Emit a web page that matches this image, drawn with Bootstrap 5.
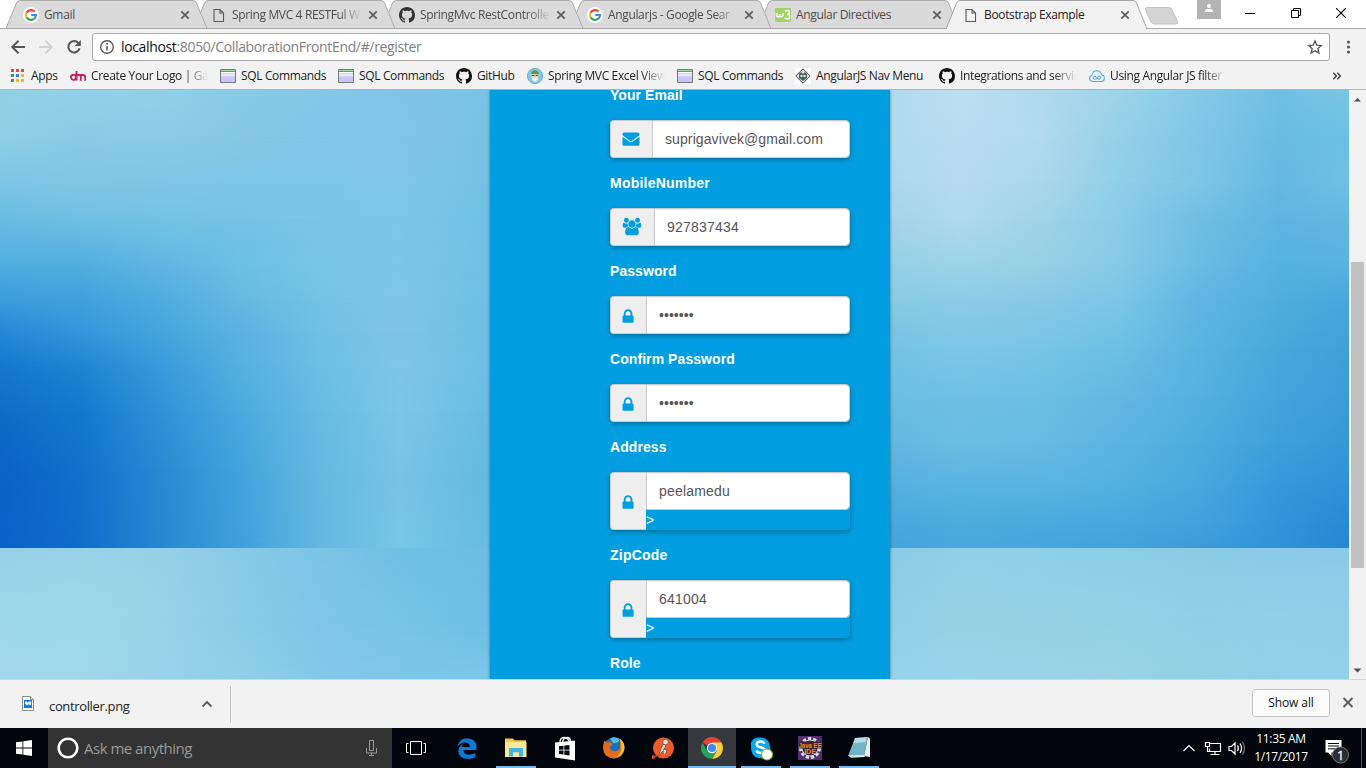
<!DOCTYPE html>
<html lang="en">
<head>
<meta charset="utf-8">
<meta name="viewport" content="width=device-width, initial-scale=1">
<title>Bootstrap Example</title>
<link href="https://cdn.jsdelivr.net/npm/bootstrap@5.3.0/dist/css/bootstrap.min.css" rel="stylesheet">
<style>
  body{width:1366px;height:768px;overflow:hidden;font:12px/16px "Open Sans","Noto Sans",sans-serif;color:#222;background:#fff}
  svg{display:block;flex:none}
  .ui{letter-spacing:-.35px;white-space:nowrap}
  .fade-end{-webkit-mask-image:linear-gradient(90deg,#000 calc(100% - 24px),transparent);mask-image:linear-gradient(90deg,#000 calc(100% - 24px),transparent)}
  /* tab strip */
  .tabstrip{height:29px;padding-left:6px;border-bottom:1px solid #a9a9a9}
  .tab{position:relative;width:201px;height:29px;margin-right:-13px;padding:1px 0 0 17px;gap:5px;color:#4c4c4c;flex:none}
  .tab > .shape{position:absolute;left:0;top:0;z-index:-1}
  .tab .ttl{width:131px}
  .tab.on{color:#222}
  .newtab{margin:7px 0 0 10px}
  .who{width:24px;height:19px;background:#b3b3b3}
  .winbtns{margin:0 2px 0 7px}
  .winbtn{width:45.5px;height:26px}
  /* toolbar */
  .tools{height:34px;background:#f2f2f2;padding:4px 0 2px}
  .omni{width:1238px;height:28px;border:1px solid #a9a9a9;border-radius:3px;background:#fff;font-size:14px}
  .omni .host{color:#111}
  .omni .rest{color:#808080}
  .marks{height:27px;background:#f2f2f2;border-bottom:1px solid #b5b3b4;padding:0 0 1px 10px;display:grid;grid-template-columns:60px 150px 118px 118px 71px 150px 118px 144px 150px 150px 1fr}
  .marks .ttl{width:117px}
  .marks > div{gap:5px;color:#1c1c1c}
  /* page */
  .page{height:589px;position:relative;overflow:hidden}
  .mesh{position:relative;overflow:hidden}
  .mesh > i{position:absolute;inset:0}
  .sheet{width:400px;background:#009ee0;box-shadow:0 0 3px rgba(0,0,0,.45);z-index:2;padding:0 40px 0 120px;font-family:"Liberation Sans",Arial,sans-serif;font-size:14px;line-height:20px;color:#fff}
  .sheet .fields{margin-top:-5px}
  .sheet label{display:block;margin-bottom:15px;font-weight:700;letter-spacing:.07px}
  .sheet .label-wide{letter-spacing:.22px}
  .field-row{margin-bottom:15px;box-shadow:0 2px 5px rgba(0,0,0,.3);border-radius:4px;display:flex}
  .sheet .input-group-text{background:#eee;border:1px solid #ccc;border-right:0;border-radius:4px 0 0 4px;padding:0 12px 0 11px;color:#009edf}
  .sheet .form-control{height:38px;border:1px solid #ccc;border-radius:0 4px 4px 0;padding:8px 12px;font-size:14px;line-height:20px;color:#555;box-shadow:inset 0 1px 1px rgba(0,0,0,.075);letter-spacing:.2px}
  .sheet .dots{letter-spacing:.05px}
  .sheet .mail{letter-spacing:.1px}
  .scroller{width:17px;background:#f1f1f1}
  .thumb{width:13px;height:306px;margin-top:156px;background:#c1c1c1}
  /* download shelf */
  .shelf{height:49px;background:#f2f2f2;border-top:1px solid #d6d4d4}
  .shelf .item{width:231px;height:37px;border-right:1px solid #c2c2c2;padding-left:21px;font-size:13px;color:#222}
  .shelf .item span{margin-left:14px}
  .showall{width:78px;height:28px;margin-bottom:2px;border:1px solid #c4c4c4;border-radius:3px;background:#fbfbfb;color:#111;letter-spacing:-.08px}
  /* taskbar */
  .taskbar{height:40px;background:#02050b;color:#fff}
  .ask{width:344px;background:#333;color:#9a9a9a;font-size:15px;letter-spacing:-.5px;padding:0 14px 0 8px}
  .app{position:relative;width:48px;height:40px;margin-right:1px;display:flex;align-items:center;justify-content:center}
  .app.view{margin-right:3px}
  .app.run::after{content:"";position:absolute;bottom:0;left:4px;right:4px;height:2px;background:#76b9ed}
  .app.cur{background:#35383d}
  .app.cur::after{left:0;right:0}
  .clock{width:64px;line-height:18px}
</style>
</head>
<body>
<svg width="0" height="0" class="position-absolute">
  <symbol id="gh" viewBox="0 0 16 16"><path fill="currentColor" d="M8 0C3.58 0 0 3.58 0 8c0 3.54 2.29 6.53 5.47 7.59.4.07.55-.17.55-.38 0-.19-.01-.82-.01-1.49-2.01.37-2.53-.49-2.69-.94-.09-.23-.48-.94-.82-1.13-.28-.15-.68-.52-.01-.53.63-.01 1.08.58 1.23.82.72 1.21 1.87.87 2.33.66.07-.52.28-.87.51-1.07-1.78-.2-3.64-.89-3.64-3.95 0-.87.31-1.59.82-2.15-.08-.2-.36-1.02.08-2.12 0 0 .67-.21 2.2.82.64-.18 1.32-.27 2-.27.68 0 1.36.09 2 .27 1.53-1.04 2.2-.82 2.2-.82.44 1.1.16 1.92.08 2.12.51.56.82 1.27.82 2.15 0 3.07-1.87 3.75-3.65 3.95.29.25.54.73.54 1.48 0 1.07-.01 1.93-.01 2.2 0 .21.15.46.55.38A8.012 8.012 0 0 0 16 8c0-4.42-3.58-8-8-8z"/></symbol>
  <symbol id="goog" viewBox="0 0 16 16"><circle cx="8" cy="8" r="8" fill="#fff"/><g fill="none" stroke-width="2.2"><path d="M11.600 4.600A5 5 0 0 0 3.600 5.700" stroke="#ea4335"/><path d="M3.600 5.600a5 5 0 0 0 0 4.800" stroke="#fbbc05"/><path d="M3.600 10.300a5 5 0 0 0 7.900 1.200" stroke="#34a853"/><path d="M11.400 11.600A5 5 0 0 0 13 8H8.200" stroke="#4285f4"/></g></symbol>
  <symbol id="doc" viewBox="0 0 16 16"><path d="M3 2.500h6l3.500 3.500v8.500H3zM9 2.500v3.500h3.500" fill="none" stroke="#5a5a5a" stroke-width="1.100"/></symbol>
  <symbol id="x" viewBox="0 0 10 10"><path d="M1.300 1.300l7.400 7.400M8.700 1.300L1.300 8.700" stroke="#5d5d5d" stroke-width="1.700"/></symbol>
  <symbol id="tabshape" viewBox="0 0 201 29"><path d="M0 28.500L10.500 3Q11.500 .5 14 .5H187Q189.500 .5 190.500 3L201 28.500z" fill="#dadada" stroke="#ababab"/></symbol>
  <symbol id="sql" viewBox="0 0 16 16"><path d="M.5 1.500h15v13H.5z" fill="#c6c6fb" stroke="#777"/><path d="M1 2h14v3H1z" fill="#fff"/><path d="M1 2.500h14v1.500H1z" fill="#3fb83f"/><path d="M1 5.500h14v3H1z" fill="#e6e6ff"/></symbol>
  <symbol id="lock" viewBox="0 0 12 16"><path fill="currentColor" transform="translate(-2.550 1.050) scale(.0096)" d="M640 768h512v-192q0-106-75-181t-181-75-181 75-75 181v192zm832 96v576q0 40-28 68t-68 28h-960q-40 0-68-28t-28-68v-576q0-40 28-68t68-28h32v-192q0-184 132-316t316-132 316 132 132 316v192h32q40 0 68 28t28 68z"/></symbol>
</svg>

<!-- tab strip -->
<div class="tabstrip d-flex align-items-start">
  <div class="tab ui d-flex align-items-center" style="z-index:6"><svg class="shape" width="201" height="29"><use href="#tabshape"/></svg><svg width="16" height="16"><use href="#goog"/></svg><span class="ttl">Gmail</span><svg width="10" height="10"><use href="#x"/></svg></div>
  <div class="tab ui d-flex align-items-center" style="z-index:5"><svg class="shape" width="201" height="29"><use href="#tabshape"/></svg><svg width="16" height="16"><use href="#doc"/></svg><span class="ttl fade-end">Spring MVC 4 RESTFul W</span><svg width="10" height="10"><use href="#x"/></svg></div>
  <div class="tab ui d-flex align-items-center" style="z-index:4"><svg class="shape" width="201" height="29"><use href="#tabshape"/></svg><svg width="16" height="16" color="#333"><use href="#gh"/></svg><span class="ttl fade-end">SpringMvc RestControlle</span><svg width="10" height="10"><use href="#x"/></svg></div>
  <div class="tab ui d-flex align-items-center" style="z-index:3"><svg class="shape" width="201" height="29"><use href="#tabshape"/></svg><svg width="16" height="16"><use href="#goog"/></svg><span class="ttl fade-end">Angularjs - Google Sear</span><svg width="10" height="10"><use href="#x"/></svg></div>
  <div class="tab ui d-flex align-items-center" style="z-index:2"><svg class="shape" width="201" height="29"><use href="#tabshape"/></svg><svg width="16" height="16"><rect y="1" width="16" height="14" rx="1" fill="#a1d266"/><path d="M1.500 6v2q0 1.800 1.500 1.800T4.600 8V7v1q0 1.800 1.600 1.800T8 8V6M10 4.300q1-.8 2.300-.8 2 0 2 1.900 0 1.800-2.300 1.800 2.700 0 2.700 2.300t-2.500 2.400q-1.500 0-2.400-.9" fill="none" stroke="#fff" stroke-width="1.500"/></svg><span class="ttl">Angular Directives</span><svg width="10" height="10"><use href="#x"/></svg></div>
  <div class="tab on ui d-flex align-items-center" style="z-index:7"><svg class="shape" width="201" height="29"><path d="M0 29L10.500 3Q11.500 .5 14 .5H187Q189.500 .5 190.500 3L201 29" fill="#f2f2f2" stroke="#a3a3a3"/></svg><svg width="16" height="16"><use href="#doc"/></svg><span class="ttl">Bootstrap Example</span><svg width="10" height="10"><use href="#x"/></svg></div>
  <svg class="newtab" width="36" height="18"><path d="M3 .5h22q2 0 3 2l5.500 12q.8 2.500-1.500 2.500H10q-2 0-3-2L1.500 3Q.8 .8 3 .5z" fill="#d4d4d4" stroke="#c2c2c2"/></svg>
  <div class="who ms-auto d-flex justify-content-center"><svg width="10" height="14"><circle cx="5" cy="6" r="2" fill="#fff"/><path d="M1 12V11q0-2 4-2t4 2v1z" fill="#fff"/></svg></div>
  <div class="winbtns d-flex">
    <div class="winbtn d-flex align-items-center justify-content-center"><svg width="10" height="10"><path d="M0 5.500h10" stroke="#000"/></svg></div>
    <div class="winbtn d-flex align-items-center justify-content-center"><svg width="10" height="10"><path d="M.5 2.500h7v7h-7zM2.500 2.500v-2h7v7h-2" fill="none" stroke="#000"/></svg></div>
    <div class="winbtn d-flex align-items-center justify-content-center"><svg width="10" height="10"><path d="M0 0l10 10M10 0L0 10" stroke="#000" stroke-width="1.100"/></svg></div>
  </div>
</div>

<!-- toolbar -->
<div class="tools d-flex align-items-center">
  <svg width="92" height="28"><g fill="none" stroke="#555" stroke-width="2"><path d="M25 14H12.500M18.500 7.800L12.300 14l6.200 6.200"/><path stroke="#d2d2d2" d="M39 14h12.500M45.500 7.800l6.200 6.200-6.200 6.200"/><path d="M78.500 10.200A5.700 5.700 0 1 0 79.600 15.300"/></g><path d="M80.800 7v6h-6z" fill="#555"/></svg>
  <div class="omni d-flex align-items-center">
    <svg class="ms-1" width="24" height="26"><circle cx="10" cy="13" r="6.300" fill="none" stroke="#5a5a5a" stroke-width="1.400"/><path d="M10 12v4.500M10 9v1.700" stroke="#5a5a5a" stroke-width="1.600"/></svg>
    <span class="ui"><span class="host">localhost</span><span class="rest">:8050/CollaborationFrontEnd/#/register</span></span>
    <svg class="ms-auto me-1" width="20" height="20"><path d="M10 4l1.800 4.200 4.500.4-3.400 3 1 4.400L10 13.700 6.100 16l1-4.400-3.400-3 4.500-.4z" fill="none" stroke="#5a5a5a" stroke-width="1.400"/></svg>
  </div>
  <svg class="ms-auto me-2" width="18" height="20"><g fill="#5a5a5a"><circle cx="8.500" cy="5" r="1.600"/><circle cx="8.500" cy="10" r="1.600"/><circle cx="8.500" cy="15" r="1.600"/></g></svg>
</div>

<!-- bookmarks -->
<div class="marks ui">
  <div class="d-flex align-items-center"><svg width="16" height="16"><g><path fill="#e8453c" d="M1 1h3v3H1zM6 1h3v3H6zM11 1h3v3h-3z"/><path fill="#2f9e58" d="M1 6h3v3H1zM1 11h3v3H1z"/><path fill="#3f7de0" d="M6 6h3v3H6z"/><path fill="#fbb408" d="M11 6h3v3h-3zM6 11h3v3H6zM11 11h3v3h-3z"/></g></svg><span>Apps</span></div>
  <div class="d-flex align-items-center"><svg width="16" height="16"><g fill="none" stroke="#c2245c" stroke-width="1.900"><circle cx="3.600" cy="9.300" r="2.600"/><path d="M6.500 3v9.500M6.500 7H13q2.200 0 2.200 2.300v3.500M10.800 7v5.800"/></g></svg><span class="ttl fade-end">Create Your Logo | Ga</span></div>
  <div class="d-flex align-items-center"><svg width="16" height="16"><use href="#sql"/></svg><span>SQL Commands</span></div>
  <div class="d-flex align-items-center"><svg width="16" height="16"><use href="#sql"/></svg><span>SQL Commands</span></div>
  <div class="d-flex align-items-center"><svg width="16" height="16" color="#111"><use href="#gh"/></svg><span>GitHub</span></div>
  <div class="d-flex align-items-center"><svg width="16" height="16"><circle cx="8" cy="8" r="7.600" fill="#83cbe6" stroke="#4e9fc4" stroke-width=".8"/><path d="M4 6Q4.200 2.300 8 2.300T12 6z" fill="#5f9c48"/><path d="M4.800 6h6.400v4q-.5 4-3.200 4t-3.200-4z" fill="#e8d2a8"/><path d="M5.300 9.500h5.400v2L8 14l-2.700-2.500z" fill="#f6f1e6"/><path d="M5 7.500h2.400M8.600 7.500H11" stroke="#594b35"/></svg><span class="ttl fade-end">Spring MVC Excel View</span></div>
  <div class="d-flex align-items-center"><svg width="16" height="16"><use href="#sql"/></svg><span>SQL Commands</span></div>
  <div class="d-flex align-items-center"><svg width="16" height="16"><rect width="16" height="16" fill="#fff"/><path d="M8 .8L15.200 8 8 15.200.8 8z" fill="#ddd" stroke="#444"/><path d="M4 6l2-2 2 2 2-2 2 2v4l-4 3-4-3z" fill="#4c6a5c"/><path d="M5.500 7h2v2h-2zM8.500 7h2v2h-2z" fill="#e5eee9"/></svg><span>AngularJS Nav Menu</span></div>
  <div class="d-flex align-items-center"><svg width="16" height="16" color="#111"><use href="#gh"/></svg><span class="ttl fade-end">Integrations and servic</span></div>
  <div class="d-flex align-items-center"><svg width="16" height="16"><path d="M3.500 13.500Q.6 13 .6 10.300.6 8 3 7.300 3.500 2.800 8 2.700q3.800.2 4.500 4 2.900.4 2.900 3.600 0 3-3 3.200z" fill="#eef7ff" stroke="#58a8ec" stroke-width="1.100"/><path d="M8 9.800q-1-1.500-2.300-1.500T4.200 9.800t1.500 1.500T8 9.800t2.300-1.500 1.500 1.500-1.500 1.500T8 9.800z" fill="none" stroke="#58a8ec"/></svg><span class="ttl fade-end">Using Angular JS filter</span></div>
  <div class="d-flex align-items-center"><svg class="ms-auto me-4" width="9" height="8"><path d="M.3.800L3.300 4 .3 7.200M4.300.800l3 3.200-3 3.200" fill="none" stroke="#444" stroke-width="1.500"/></svg></div>
</div>

<!-- page viewport -->
<div class="page d-flex">
  <div class="mesh" id="meshLeft" style="width:490px"></div>
  <div class="sheet flex-shrink-0">
    <div class="fields">
      <label class="m-0 pb-0 mb-3" style="margin-bottom:15px!important">Your Email</label>
      <div class="field-row"><span class="input-group-text"><svg width="18" height="18" viewBox="0 0 1792 1892"><path fill="currentColor" d="M1792 710v794q0 66-47 113t-113 47h-1472q-66 0-113-47t-47-113v-794q44 49 101 87 362 246 497 345 57 42 92.500 65.500t94.500 48 110 24.500h2q51 0 110-24.500t94.500-48 92.500-65.500q170-123 498-345 57-39 100-87zm0-294q0 79-49 151t-122 123q-376 261-468 325-10 7-42.500 31t-54 38.500-52 32.500-57.500 27-50 9h-2q-23 0-50-9t-57.500-27-52-32.500-54-38.500-42.500-31q-91-64-262-182.500t-205-142.500q-62-42-117-115.500t-55-136.500q0-78 41.500-130t118.500-52h1472q65 0 112.500 47t47.500 113z"/></svg></span><div class="form-control mail">suprigavivek@gmail.com</div></div>
      <label class="label-wide">MobileNumber</label>
      <div class="field-row"><span class="input-group-text"><svg width="20" height="19" viewBox="-70 20 2060 1960"><path fill="currentColor" d="M593 896q-162 5-265 128h-134q-82 0-138-40.500t-56-118.500q0-353 124-353 6 0 43.500 21t97.500 42.500 119 21.500q67 0 133-23-5 37-5 66 0 139 81 256zm1071 637q0 120-73 189.500t-194 69.500h-874q-121 0-194-69.500t-73-189.500q0-53 3.500-103.500t14-109 26.500-108.500 43-97.500 62-81 85.500-53.500 111.500-20q10 0 43 21.500t73 48 107 48 135 21.500 135-21.500 107-48 73-48 43-21.500q61 0 111.500 20t85.500 53.500 62 81 43 97.500 26.500 108.500 14 109 3.500 103.500zm-1024-1277q0 106-75 181t-181 75-181-75-75-181 75-181 181-75 181 75 75 181zm704 384q0 159-112.500 271.500t-271.500 112.500-271.500-112.500-112.500-271.500 112.500-271.500 271.500-112.500 271.500 112.500 112.500 271.500zm576 225q0 78-56 118.500t-138 40.500h-134q-103-123-265-128 81-117 81-256 0-29-5-66 66 23 133 23 59 0 119-21.500t97.500-42.500 43.500-21q124 0 124 353zm-128-609q0 106-75 181t-181 75-181-75-75-181 75-181 181-75 181 75 75 181z"/></svg></span><div class="form-control">927837434</div></div>
      <label>Password</label>
      <div class="field-row"><span class="input-group-text"><svg width="12" height="16"><use href="#lock"/></svg></span><div class="form-control dots">•••••••</div></div>
      <label>Confirm Password</label>
      <div class="field-row"><span class="input-group-text"><svg width="12" height="16"><use href="#lock"/></svg></span><div class="form-control dots">•••••••</div></div>
      <label>Address</label>
      <div class="field-row"><span class="input-group-text"><svg width="12" height="16"><use href="#lock"/></svg></span><div class="flex-grow-1"><div class="form-control">peelamedu</div>&gt;</div></div>
      <label class="label-wide">ZipCode</label>
      <div class="field-row"><span class="input-group-text"><svg width="12" height="16"><use href="#lock"/></svg></span><div class="flex-grow-1"><div class="form-control">641004</div>&gt;</div></div>
      <label>Role</label>
    </div>
  </div>
  <div class="mesh" id="meshRight" style="width:459px"></div>
  <div class="scroller d-flex flex-column align-items-center">
    <svg style="margin-top:7px" width="9" height="9"><path d="M1 3.500L4.500 0 8 3.500z" transform="translate(0 1)" fill="#505050"/></svg>
    <div class="thumb"></div>
    <svg class="mt-auto mb-1" width="9" height="7"><path d="M.5 .5h8L4.500 4.500z" fill="#505050"/></svg>
  </div>
</div>

<!-- download shelf -->
<div class="shelf ui d-flex align-items-center">
  <div class="item d-flex align-items-center">
    <svg width="14" height="18"><path d="M1.500 1.500h8l3 3v11h-11z" fill="#fff" stroke="#8b8b8b"/><path d="M9.500 1.500v3h3" fill="#ddd" stroke="#8b8b8b"/><path d="M3 5h8v8H3z" fill="#0f7bd8"/><path d="M4 6.500h2l.8 1.500L8 6.500h2.200v3l-1.200 1-1.500-1.500L6 10.500 4 8.500z" fill="#fff"/></svg>
    <span class="pt-1">controller.png</span>
    <svg class="ms-auto me-3" width="14" height="10"><path d="M2.500 7.500L7 3l4.500 4.500" fill="none" stroke="#5a5a5a" stroke-width="1.800"/></svg>
  </div>
  <div class="showall ms-auto d-flex align-items-center justify-content-center">Show all</div>
  <svg class="ms-2 me-2 mb-1" width="20" height="12"><path d="M5.500 2l9 9M14.500 2l-9 9" stroke="#5d5d5d" stroke-width="1.900"/></svg>
</div>

<!-- taskbar -->
<div class="taskbar d-flex">
  <svg width="48" height="40"><path fill="#fff" d="M16 14.300l6.500-.9v6.200H16zM23.300 13.300L32 12v7.600h-8.700zM16 20.400h6.500v6.200l-6.500-.9zM23.300 20.400H32V28l-8.700-1.200z"/></svg>
  <div class="ask ui d-flex align-items-center"><svg width="24" height="24"><circle cx="12" cy="12" r="9.300" fill="none" stroke="#fff" stroke-width="2.600"/></svg><span class="ms-1">Ask me anything</span><svg class="ms-auto" width="13" height="18"><path d="M4.500 1.500h4v10h-4zM1.500 9v5h10V9M6.500 14v2.500M4 16.500h5" fill="none" stroke="#9a9a9a"/></svg></div>
  <div class="app view"><svg width="20" height="14"><path d="M4.500.5h11v13h-11zM2.500 2.500h-2v9h2M17.500 2.500h2v9h-2" fill="none" stroke="#fff"/></svg></div>
  <div class="d-flex" id="apps"></div>
  <div class="ms-auto d-flex align-items-center ui">
    <svg width="68" height="40"><g fill="none" stroke="#fff" stroke-width="1.200"><path d="M2.500 23L8 17.500 13.500 23"/><path d="M29 15.500h10.500v8H28.500v-3M34 23.500v3M29.500 26.500h9M24.500 14.500h4v4h-4zM26.500 18.500v5h2"/><path d="M48 18.500h2.500l3.500-3.500v11l-3.500-3.500H48zM56.500 17.500q1.800 2.800 0 5.500"/><path d="M59 15.500q3.200 4.700 0 9.500"/><path d="M61.500 13.800q4 6.500 0 13" stroke="#777"/></g></svg>
    <div class="clock text-center">11:35 AM<br>1/17/2017</div>
    <svg width="53" height="40"><path d="M12.500 12h16v12.500h-10v3.500l-3.500-3.500h-2.500z" fill="#fff"/><path d="M15 15.500h11M15 18h11M15 20.800h7" stroke="#05080e"/><circle cx="27.500" cy="27" r="8" fill="#2b2d31" stroke="#777"/><text x="27.500" y="31.500" font-size="12.500" fill="#fff" stroke="#fff" stroke-width=".3" text-anchor="middle">1</text><path d="M48.500 0v40" stroke="#555"/></svg>
  </div>
</div>

<script>
  // Bilinear colour field: every layer is one horizontal gradient, faded in between its own y and the previous one.
  function field(host, xs, rows) {
    rows.forEach(function (r, i) {
      var el = document.createElement('i');
      var stops = r[1].split(' ').map(function (c, k) { return '#' + c + ' ' + xs[k] + 'px'; });
      el.style.background = 'linear-gradient(90deg,' + stops.join(',') + ')';
      if (i) {
        var from = rows[i - 1][0], m = 'linear-gradient(180deg,transparent ' + from + 'px,#000 ' + r[0] + 'px)';
        el.style.webkitMaskImage = m; el.style.maskImage = m;
      }
      host.appendChild(el);
    });
  }
  field(document.getElementById('meshLeft'), [0, 80, 160, 240, 320, 400, 489], [
    [1, '90d2e4 94d0ea 92d0e8 88cbe6 84c8e8 80c4e6 78c4e4'],
    [47, '8ed0e4 8acae4 8acce6 86c8e2 80c6e8 82c4e6 76c2e2'],
    [93, '7cc6e6 80c6e4 80c6e6 7cc6e6 7cc6e6 7ec6e6 74c2e2'],
    [128, '6abce0 70c0e4 74c2e2 76c2e6 7ac6e6 7cc6e6 70c0e6'],
    [151, '5eb6e2 60b8e0 6abee4 70c0e4 78c4e4 7cc6e6 70c0e4'],
    [174, '50aee0 50aede 60b6e2 6cc0e4 78c6e6 7cc6e6 70c0e4'],
    [208, '3c9edc 42a2dc 4eace0 66bae0 74c2e4 7ec6e6 6ebfe4'],
    [243, '2488d6 3296dc 44a6dc 5ab2e2 70c0e4 7ec4e4 6cbfe2'],
    [277, '1478cc 1e84d0 389ada 54b0e0 6cbfe4 7ec6e6 6cbfe4'],
    [323, '0e6cc8 1278cc 2e92d8 4aaade 66bce2 7cc6e6 68bce4'],
    [381, '0a62c6 1170cc 268ad2 42a4dc 64bae0 78c2e6 64bae0'],
    [458, '0a62c8 106ccb 2488d0 40a0da 62b8e0 78c6e4 66bce2'],
    [458, '96d0e8 98d2e8 96d0e6 88cbe6 7cc4e6 70bfe4 6cbfe2'],
    [526, '9cd6ea 9cd8ea 98d2e8 8acce6 7ec6e6 76c4e4 6cbee4'],
    [589, 'a2d8ec a0d8ea 98d2ea 8ed0e6 84c8e8 7ec6e6 7ac6e6']
  ]);
  field(document.getElementById('meshRight'), [0, 70, 150, 230, 310, 390, 459], [
    [1, 'b0daec bcdff0 b0daec 9cd4ea 84cae6 70bfe4 7ac6e2'],
    [47, 'b0daec b8dcee b2daee 94d0e8 80c6e6 6abce2 6cc0e6'],
    [93, 'acd8ee b6daee aad8ea 90cee8 7cc6e4 66b8e2 70c0e4'],
    [128, 'a4d4e8 b0daee a0d4e8 8acce8 70bee2 5eb6e0 64b8e0'],
    [174, '94d0e6 9cd4e8 96d0e4 86cae6 6abce2 54b2de 58b2e0'],
    [208, '88cce2 8ccce6 88cae6 7cc6e6 60b6e2 50aedc 48a8de'],
    [258, '74c2e4 7cc8e6 78c4e4 6cc0e4 58b4e0 48a8dc 40a0d8'],
    [308, '6cbee4 70bee4 6cbfe4 62b8e0 54b0e0 44a4dc 3c9cd8'],
    [354, '62b8e0 6abee2 66bce2 5ab4e0 4cacde 3ea0da 3498d8'],
    [396, '54b0e0 58b4e0 58b4e0 52b0e0 48a8de 3498da 2e92d8'],
    [434, '48a8e0 4cacdc 4aaade 48a8de 42a2dc 3294da 268ad4'],
    [458, '44a4dc 48a8de 46a6dc 42a4dc 3c9cd8 2e94da 2488d2'],
    [458, '8acce6 90d0e8 8ed0ea 8ccee6 8acce4 8acae8 8acae8'],
    [526, '8ed0e8 96d0e4 94d0e4 92d2e6 8ed0e6 90d0e8 8ed0e8'],
    [589, '94d2ea 98d4ea 98d2e8 98d2e4 90d2e4 90d0e8 90d0e8']
  ]);

  // Pinned and running applications: [extra class, 26x26 drawing]
  var apps = [
    ['', '<path d="M3.500 11.500Q5 3.500 13 3.300q9.500.2 9.500 9.200v2.500H9.200q.6 4.600 5.600 4.700 3.600 0 6.500-1.800v4.300Q18 24 14 24 5 23.800 4.300 16.500 4.200 11.500 9.800 8.600 7.500 10.500 7.500 12h8.300q.2-4.200-4.200-4.500-4.800-.1-8.100 4z" fill="#0a78d7"/>'],
    ['run', '<path d="M2 5.500V3.500h8l1.500 1.700H23V22H2z" fill="#f0c84b"/><path d="M2 7h21.500v15H2z" fill="#fce796"/><path d="M6 13h14v8.500h-4v-4.200h-6v4.200H6z" fill="#3db5ea"/>'],
    ['', '<path d="M8 7q0-4.500 4-4.500t5 4M10.500 7q1-4.500 5-4.500 3 .2 3 4" fill="none" stroke="#fff" stroke-width="1.300"/><path d="M3 7.500L23 5.500v20L3 22.500z" fill="#fff"/><path d="M7 11.200l4.500-.5v4H7zM12.300 10.600l5.200-.6v4.700h-5.200zM7 15.500h4.500v4L7 19zM12.300 15.500h5.200v4.900l-5.200-.7z" fill="#05080e"/>'],
    ['', '<circle cx="13" cy="13" r="10.500" fill="#1f6fb6"/><path d="M9 3.500Q14 1 19 4q-2 5-7 4z" fill="#4dbbe8"/><path d="M3.500 5.500l2 2 4-.5 2 3-3 2q1 4.500 5.500 4.300Q20 16 19 8q-.5-3 0-4 5 4 4.300 10-2 9.500-11 9.600Q2.200 22 2 13 2 8.500 3.500 5.500z" fill="#e66b1c"/><path d="M19 4q5.200 4 4.300 10-1.500 7-8 8 6-4 5-11z" fill="#fcc62e"/>'],
    ['', '<circle cx="13.500" cy="13" r="10.500" fill="#f05a28"/><path d="M2 20l5 1-3.500 3H2z" fill="#d9491b"/><path d="M13 9l3 1.500-2.500 5-5 5.500 2-6zM13 14l4 1-2 6" fill="#e9dcd0" stroke="#6d4b3d" stroke-width=".8"/><circle cx="15.500" cy="7" r="2.800" fill="#efe8e0" stroke="#6d4b3d" stroke-width=".8"/>'],
    ['run cur', '<path d="M13 13L3.500 7.500A11 11 0 0 1 22.500 7.500z" fill="#df4437"/><path d="M13 7.500h9.500A11 11 0 0 1 13 24l4.800-8.300z" fill="#fccd34"/><path d="M3.500 7.500A11 11 0 0 0 13 24l4.700-8.200L13 13 8.200 15.800z" fill="#23a25a"/><circle cx="13" cy="13" r="5.200" fill="#f6f6f6"/><circle cx="13" cy="13" r="4.100" fill="#4688f1"/>'],
    ['run', '<path d="M3 10A7 7 0 0 1 11 2.500Q21 2 22 12q3 9-6.500 11.500Q3 24 3 12z" fill="#0ca7e8"/><path d="M16.500 8.500Q15 6.500 12 6.600 8.700 7 8.700 9.500q.2 2.200 4 2.800 4 .8 3.900 3-.4 2.700-4 2.700-3 0-4.300-2.300" fill="none" stroke="#fff" stroke-width="2.500"/><circle cx="19" cy="19.500" r="5.500" fill="#fff" stroke="#7fba00" stroke-width="1.200"/>'],
    ['run', '<path d="M1 1h24v24H1z" fill="#53316f"/><circle cx="13" cy="13" r="9.500" fill="none" stroke="#d9d9de" stroke-width="3" stroke-dasharray="3.300 2"/><circle cx="13" cy="13" r="8" fill="#33233d" stroke="#d9d9de"/><path d="M2 6.500h22v7H2z" fill="#3a2430"/><text x="1.500" y="12.500" font-family="Liberation Sans" font-weight="700" font-size="7" letter-spacing="0" fill="#f48a1d" textLength="23" lengthAdjust="spacingAndGlyphs">Java EE</text><text x="13" y="19" text-anchor="middle" font-family="Liberation Sans" font-weight="700" font-size="7" fill="#f48a1d">IDE</text>'],
    ['run', '<path d="M9 3l13-1-4 19L2 21z" fill="#70b6c8"/><path d="M9 3l12-.8-1.500 5L7.500 8z" fill="#b8dde4"/><path d="M2 20.500L18 20l1 2-14 .8z" fill="#dfe9ea"/><path d="M22 2l2 1.500V22l-6-1z" fill="#e9eff0"/>']
  ];
  document.getElementById('apps').innerHTML = apps.map(function (a) {
    return '<div class="app ' + a[0] + '"><svg width="26" height="26">' + a[1] + '</svg></div>';
  }).join('');
</script>
</body>
</html>
